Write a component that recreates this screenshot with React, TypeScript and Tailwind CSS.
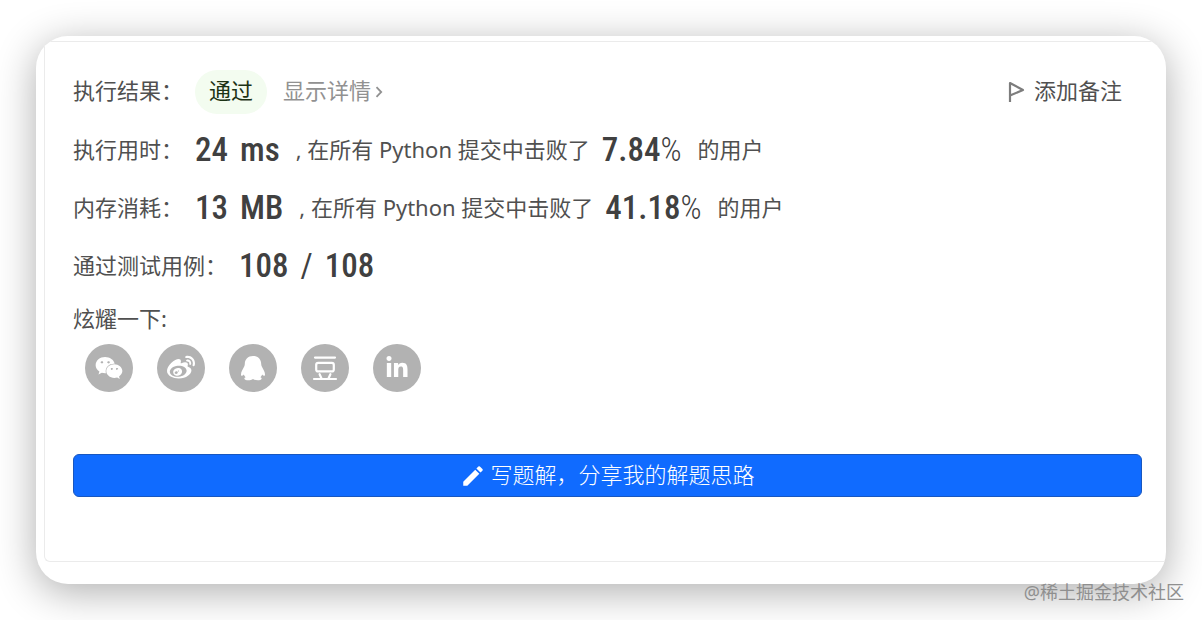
import { ReactNode } from "react";
import { FaLinkedinIn, FaWeibo, FaWeixin } from "react-icons/fa";
import { MdEdit } from "react-icons/md";

const FlagIcon = () => (
  <svg width="18" height="22" viewBox="0 0 18 22" fill="none" stroke="#7d7d7d" strokeWidth="2.2" aria-hidden="true">
    <path d="M2 21V2L15 9L2 14.500" strokeLinejoin="round" />
  </svg>
)

const ChevronIcon = () => (
  <svg width="8" height="12" viewBox="0 0 8 12" fill="none" stroke="currentColor" strokeWidth="1.8" aria-hidden="true">
    <path d="M1.5 1.2L6.2 6L1.5 10.8" />
  </svg>
)

const QqIcon = () => (
  <svg width="26" height="26" viewBox="0 0 26 26" fill="#fff" aria-hidden="true">
    <path d="M13 1C8 1 4.800 4.500 4.800 9C4.800 10 4.600 10.600 4.200 11.600C2.600 14.600 1 17 1 19.600C1 21.200 2 21.400 3.800 19.400C4.200 20.600 4.800 21.400 5.600 22.200C3.800 22.800 3.600 25 7 25.200C9.600 25.400 11.800 24.800 13 24C14.200 24.800 16.400 25.400 19 25.200C22.400 25 22.200 22.800 20.400 22.200C21.200 21.400 21.800 20.600 22.200 19.400C24 21.400 25 21.200 25 19.600C25 17 23.400 14.600 21.800 11.600C21.400 10.600 21.200 10 21.200 9C21.200 4.500 18 1 13 1Z" />
  </svg>
)

const DoubanIcon = () => (
  <svg width="26" height="26" viewBox="0 0 26 26" fill="none" stroke="#fff" strokeWidth="2.2" strokeLinecap="round" aria-hidden="true">
    <path d="M3 2.600H23M2 24H24" />
    <rect x="4.200" y="7.800" width="17.600" height="8.600" rx="2" />
    <path d="M7.600 19.200L9.400 23.200M18.400 19.200L16.600 23.200" />
  </svg>
)

const shareTargets = [
  { name: "微信", icon: <FaWeixin size={28} /> },
  { name: "微博", icon: <FaWeibo size={28} /> },
  { name: "QQ", icon: <QqIcon /> },
  { name: "豆瓣", icon: <DoubanIcon /> },
  { name: "LinkedIn", icon: <FaLinkedinIn size={24} /> },
]

const Text = ({ children }: { children: ReactNode }) => (
  <span className="pb-1">{children}</span>
)

const Stat = ({ children }: { children: ReactNode }) => (
  <span className="flex items-baseline gap-3 pb-[2px] font-['Roboto_Condensed','Roboto',sans-serif] text-[33px] font-medium text-[#404040]">
    {children}
  </span>
)

interface RankRowProps {
  label: string;
  value: string;
  unit: string;
  percent: string;
}

const RankRow = ({ label, value, unit, percent }: RankRowProps) => (
  <div className="flex h-[58px] items-center">
    <Text>{label}：</Text>
    <div className="mr-4 ml-3">
      <Stat><span>{value}</span><span>{unit}</span></Stat>
    </div>
    <Text>, 在所有 Python 提交中击败了</Text>
    <div className="mr-4 ml-3">
      <Stat><span>{percent}<span className="font-light">%</span></span></Stat>
    </div>
    <Text>的用户</Text>
  </div>
)

const App = () => {
  return (
    <div className="relative min-h-screen bg-white p-9 font-['Noto_Sans','Noto_Sans_CJK_SC',sans-serif] text-[22px] leading-8 text-[#505050]">
      <main className="overflow-hidden rounded-[32px] bg-white pt-[5px] pb-[22px] pl-2 shadow-[0_8px_40px_rgba(0,0,0,0.32)]">
        <section className="rounded-bl-md border-y border-l border-[#ebebeb] pt-7 pr-6 pb-16 pl-7">
          <div className="mb-2 flex h-11 items-center whitespace-nowrap">
            <Text>执行结果：</Text>
            <span className="ml-3 rounded-full bg-[#f3fcf0] px-[14px] pt-1 pb-2 text-[#1c3315]">通过</span>
            <a href="#detail" className="ml-4 flex items-center gap-1 text-[#919191]">
              <Text>显示详情</Text>
              <ChevronIcon />
            </a>
            <button type="button" className="mr-5 ml-auto flex items-center gap-2">
              <FlagIcon />
              <Text>添加备注</Text>
            </button>
          </div>

          <div className="whitespace-nowrap">
            <RankRow label="执行用时" value="24" unit="ms" percent="7.84" />
            <RankRow label="内存消耗" value="13" unit="MB" percent="41.18" />
            <div className="flex h-[58px] items-center">
              <Text>通过测试用例：</Text>
              <div className="ml-3">
                <Stat><span>108</span><span className="font-normal">/</span><span>108</span></Stat>
              </div>
            </div>
          </div>

          <p className="pt-[6px] pb-[10px]">炫耀一下:</p>
          <div className="flex gap-6 pl-3">
            {shareTargets.map((target) => (
              <button
                key={target.name}
                type="button"
                aria-label={target.name}
                className="flex size-12 items-center justify-center rounded-full bg-[#b2b2b2] text-white"
              >
                {target.icon}
              </button>
            ))}
          </div>

          <button
            type="button"
            className="mt-[62px] flex h-[43px] w-full items-center justify-center gap-1 rounded-md border border-[#1857c0] bg-[#106bff] font-light text-white"
          >
            <MdEdit size={26} />
            <Text>写题解，分享我的解题思路</Text>
          </button>
        </section>
      </main>
      <span className="absolute right-[18px] bottom-4 text-lg leading-6 text-[#8f8f8f]">@稀土掘金技术社区</span>
    </div>
  )
}

export default App
